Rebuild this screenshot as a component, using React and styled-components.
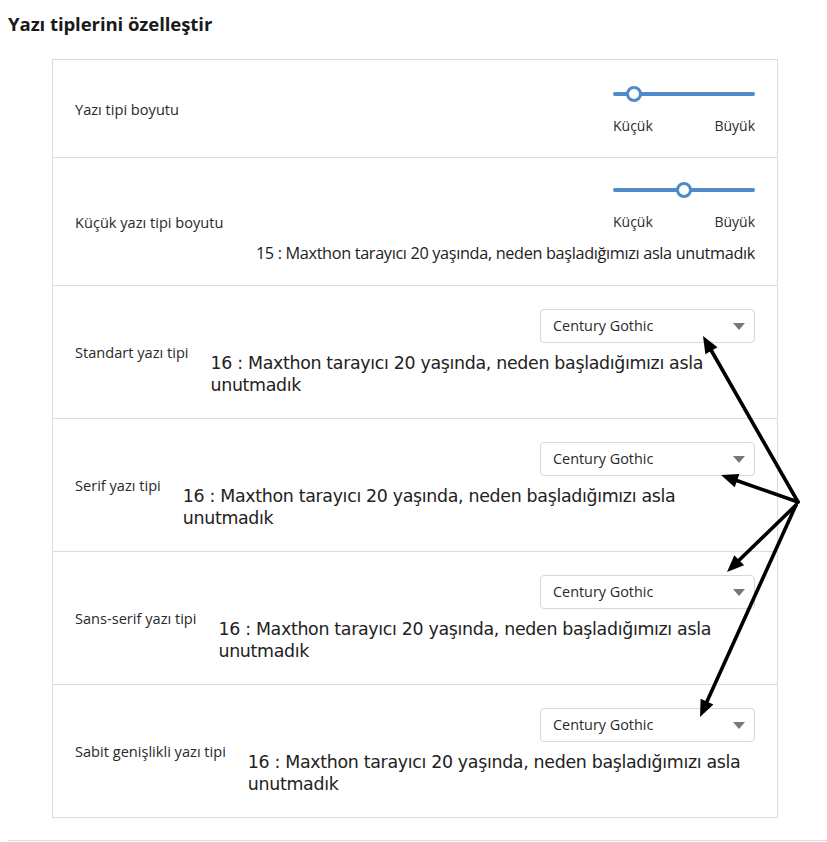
import React from "react";
import styled, { createGlobalStyle } from "styled-components";

const Global = createGlobalStyle`
  html, body { margin: 0; padding: 0; background: #fff; }
  body { font-family: "Open Sans", "Noto Sans", sans-serif; color: #222; }
`;

const Page = styled.div`
  position: relative;
  width: 827px;
  height: 842px;
  padding: 0 0 0 8px;
  box-sizing: border-box;
`;

const Title = styled.h2`
  margin: 0;
  padding-top: 11px;
  font-family: "Open Sans", sans-serif;
  font-size: 18.6px;
  font-weight: 700;
  color: #1a1a1a;
  letter-spacing: -0.1px;
  line-height: 26px;
`;

const Panel = styled.div`
  margin: 22px 0 0 44px;
  width: 726px;
  border: 1px solid #dcdcdc;
  box-sizing: border-box;
`;

const Row = styled.div`
  display: flex;
  align-items: center;
  gap: 22px;
  height: ${(p) => p.$h}px;
  padding: 0 22px 0 22px;
  box-sizing: border-box;
  border-top: ${(p) => (p.$first ? "none" : "1px solid #dcdcdc")};
`;

const Label = styled.div`
  flex: none;
  font-size: 14.6px;
  color: #2a2a2a;
  white-space: nowrap;
`;

const Cell = styled.div`
  flex: 1;
  display: flex;
  flex-direction: column;
  align-items: ${(p) => (p.$right ? "flex-end" : "stretch")};
`;

const SliderBox = styled.div`
  width: 142px;
  display: flex;
  flex-direction: column;
  padding-top: ${(p) => p.$pt || 0}px;
`;

const Track = styled.div`
  position: relative;
  height: 18px;
  display: flex;
  align-items: center;
  &::before {
    content: "";
    flex: 1;
    height: 4px;
    background: #4f8acb;
    border-radius: 2px;
  }
`;

const Thumb = styled.div`
  position: absolute;
  top: 1px;
  width: 16px;
  height: 16px;
  box-sizing: border-box;
  border: 3px solid #4f8acb;
  border-radius: 50%;
  background: #fff;
`;

const Ends = styled.div`
  display: flex;
  justify-content: space-between;
  margin-top: 14px;
  font-size: 14px;
  color: #2a2a2a;
  line-height: 18px;
`;

const Sample15 = styled.div`
  margin-top: 11px;
  font-size: 16.3px;
  color: #222;
  line-height: 22px;
  white-space: nowrap;
  letter-spacing: -0.35px;
`;

const Select = styled.div`
  align-self: flex-end;
  width: 215px;
  height: 34px;
  box-sizing: border-box;
  border: 1px solid #d8d8d8;
  border-radius: 4px;
  display: flex;
  align-items: center;
  justify-content: space-between;
  padding: 0 9px 0 12px;
  font-size: 14.4px;
  color: #2a2a2a;
`;

const Caret = styled.span`
  width: 0;
  height: 0;
  border-left: 6px solid transparent;
  border-right: 6px solid transparent;
  border-top: 7px solid #777;
  margin-top: 2px;
`;

const Sample16 = styled.div`
  margin-top: 9px;
  font-family: "DejaVu Sans", sans-serif;
  font-size: 17.4px;
  letter-spacing: -0.32px;
  line-height: 22px;
  color: #222;
`;

const Bottom = styled.div`
  margin-top: 22px;
  height: 1px;
  background: #dcdcdc;
`;

const Overlay = styled.svg`
  position: absolute;
  left: 0;
  top: 0;
  pointer-events: none;
`;

const Slider = ({ pos, pt }) => (
  <SliderBox $pt={pt}>
    <Track>
      <Thumb style={{ left: pos - 8 }} />
    </Track>
    <Ends>
      <span>Küçük</span>
      <span>Büyük</span>
    </Ends>
  </SliderBox>
);

const sample = "16 : Maxthon tarayıcı 20 yaşında, neden başladığımızı asla unutmadık";

const fontRows = [
  "Standart yazı tipi",
  "Serif yazı tipi",
  "Sans-serif yazı tipi",
  "Sabit genişlikli yazı tipi",
];

const Arrow = ({ x1, y1, x2, y2 }) => {
  const dx = x2 - x1;
  const dy = y2 - y1;
  const len = Math.hypot(dx, dy);
  const ux = dx / len;
  const uy = dy / len;
  const hl = 17;
  const hw = 7;
  const bx = x2 - ux * hl;
  const by = y2 - uy * hl;
  const p1 = `${x2},${y2}`;
  const p2 = `${bx - uy * hw},${by + ux * hw}`;
  const p3 = `${bx + uy * hw},${by - ux * hw}`;
  return (
    <g>
      <line x1={x1} y1={y1} x2={bx + ux * 2} y2={by + uy * 2} stroke="#000" strokeWidth="3.6" strokeLinecap="round" />
      <polygon points={`${p1} ${p2} ${p3}`} fill="#000" />
    </g>
  );
};

export default function App() {
  return (
    <Page>
      <Global />
      <Title>Yazı tiplerini özelleştir</Title>
      <Panel>
        <Row $h={97} $first>
          <Label>Yazı tipi boyutu</Label>
          <Cell $right>
            <Slider pos={21} pt={2} />
          </Cell>
        </Row>
        <Row $h={128}>
          <Label>Küçük yazı tipi boyutu</Label>
          <Cell $right>
            <Slider pos={71} pt={2} />
            <Sample15>15 : Maxthon tarayıcı 20 yaşında, neden başladığımızı asla unutmadık</Sample15>
          </Cell>
        </Row>
        {fontRows.map((l) => (
          <Row $h={133} key={l}>
            <Label>{l}</Label>
            <Cell>
              <Select>
                <span>Century Gothic</span>
                <Caret />
              </Select>
              <Sample16>{sample}</Sample16>
            </Cell>
          </Row>
        ))}
      </Panel>
      <Bottom />
      <Overlay width="827" height="842" viewBox="0 0 827 842">
        <Arrow x1={798} y1={502} x2={703} y2={336} />
        <Arrow x1={798} y1={502} x2={721} y2={475} />
        <Arrow x1={796} y1={505} x2={727} y2={572} />
        <Arrow x1={796} y1={505} x2={700} y2={717} />
      </Overlay>
    </Page>
  );
}
